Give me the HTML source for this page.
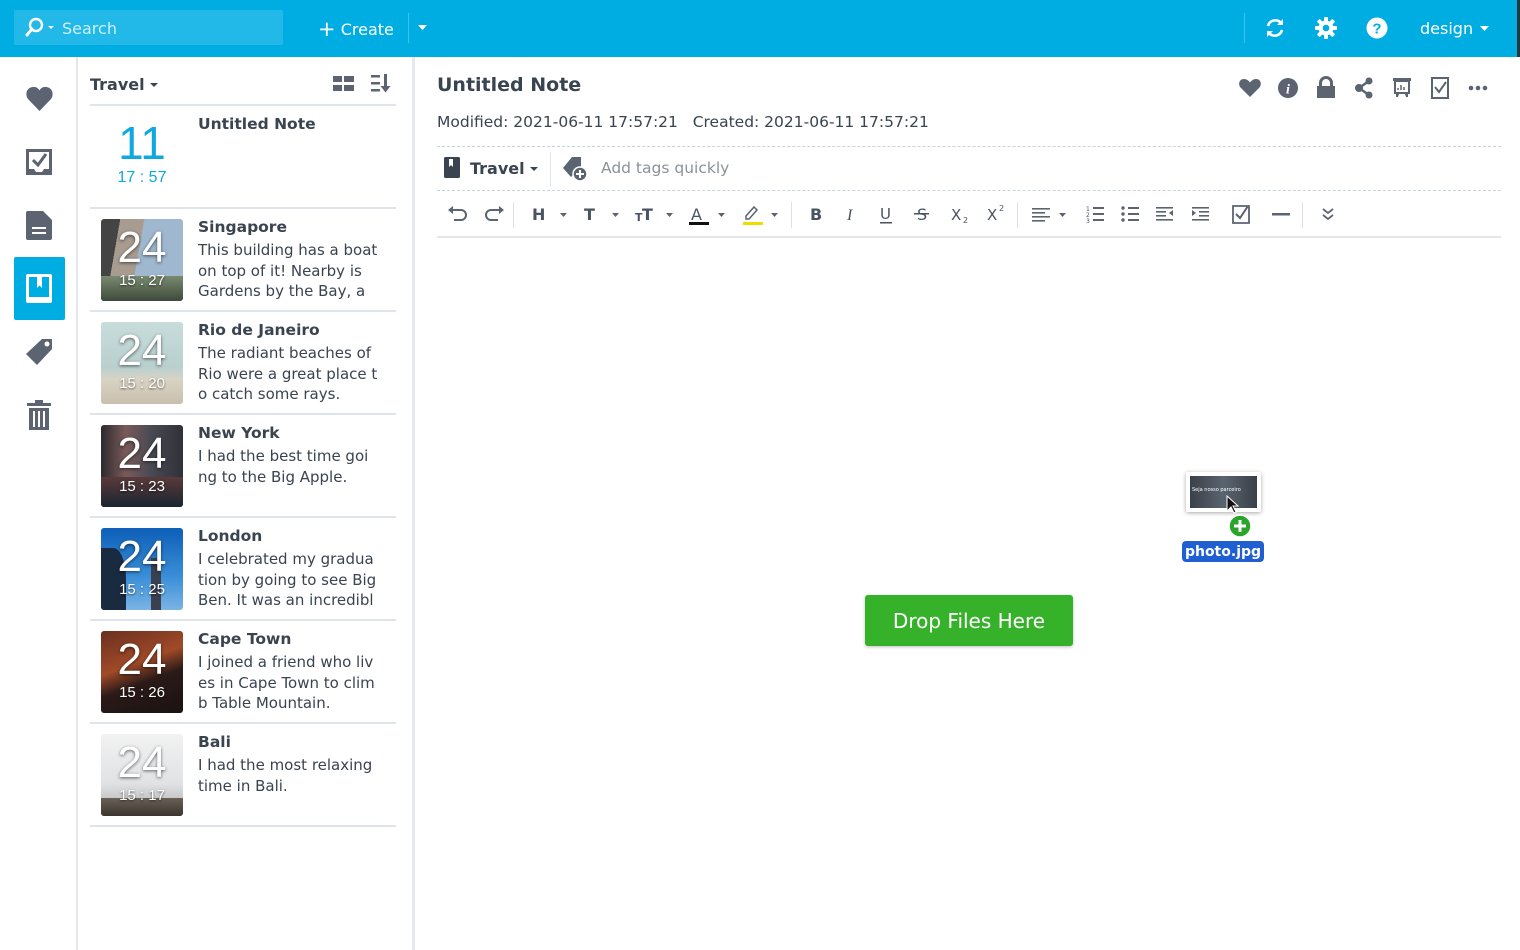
<!DOCTYPE html>
<html><head><meta charset="utf-8"><style>
*{margin:0;padding:0;box-sizing:border-box}
body{width:1520px;height:950px;overflow:hidden;background:#fff;font-family:"DejaVu Sans","Liberation Sans",sans-serif;color:#3a4350;position:relative}
.a{position:absolute}
.top{left:0;top:0;width:1520px;height:57px;background:#00ade2}
.search{left:14px;top:10px;width:269px;height:35px;background:#22b9e8;border-radius:2px}
.wt{color:#fff;font-size:15px}
.side{left:0;top:57px;width:78px;height:893px;background:#fff;border-right:2px solid #e4e7eb}
.list{left:80px;top:57px;width:335px;height:893px;border-right:3px solid #e6e9ed}
.item{left:90px;width:306px;height:103px;border-bottom:2px solid #dfe4ea}
.th{left:11px;top:10px;width:82px;height:82px;border-radius:3px;overflow:hidden}
.th .d{position:absolute;left:0;width:82px;text-align:center;top:4px;font-family:"Liberation Sans",sans-serif;font-size:44px;color:#fff;text-shadow:0 1px 3px rgba(0,0,0,.6)}
.th .t{position:absolute;left:0;width:82px;text-align:center;top:53px;font-family:"Liberation Sans",sans-serif;font-size:15px;color:#fff;text-shadow:0 1px 2px rgba(0,0,0,.6)}
.nt{left:108px;top:9px;font-weight:bold;font-size:15.5px;color:#3a4350}
.nb{left:108px;top:31px;font-size:15px;line-height:20.5px;color:#3a4350;white-space:nowrap}
.dash{left:437px;width:1064px;border-top:1px dashed #c9d3dc}
</style></head><body>
<div class="a top"></div>
<div class="a" style="left:1517px;top:0;width:3px;height:57px;background:#1d3640"></div>
<div class="a search"></div>
<svg class="a" style="left:24px;top:17px" width="34" height="22" viewBox="0 0 34 22"><circle cx="12" cy="8" r="6" fill="none" stroke="#fff" stroke-width="2.4"/><path d="M8 12 3 18" stroke="#fff" stroke-width="3" stroke-linecap="round"/><path d="M24 9h6l-3 3z" fill="#fff"/></svg>
<div class="a wt" style="left:62px;top:19px;color:#cdeffa;font-size:16px">Search</div>
<div class="a wt" style="left:318px;top:16px;font-size:16px"><span style="font-size:21px;position:relative;top:1px">+</span> Create</div>
<div class="a" style="left:408px;top:13px;width:1px;height:30px;background:#3cc2ec"></div>
<svg class="a" style="left:418px;top:25px" width="10" height="6"><path d="M0 0h9l-4.5 5z" fill="#fff"/></svg>
<div class="a" style="left:1244px;top:13px;width:1px;height:30px;background:#3cc2ec"></div>
<svg class="a" style="left:1264px;top:17px" width="22" height="22" viewBox="0 0 22 22"><path d="M4 9a7.5 7.5 0 0 1 13-3" fill="none" stroke="#fff" stroke-width="2.6"/><path d="M19 2v6h-6z" fill="#fff"/><path d="M18 13a7.5 7.5 0 0 1-13 3" fill="none" stroke="#fff" stroke-width="2.6"/><path d="M3 20v-6h6z" fill="#fff"/></svg>
<svg class="a" style="left:1315px;top:17px" width="22" height="22" viewBox="0 0 22 22"><g fill="#fff"><circle cx="11" cy="11" r="7.5"/><rect x="9" y="0" width="4" height="22" rx="1"/><rect x="9" y="0" width="4" height="22" rx="1" transform="rotate(45 11 11)"/><rect x="9" y="0" width="4" height="22" rx="1" transform="rotate(90 11 11)"/><rect x="9" y="0" width="4" height="22" rx="1" transform="rotate(135 11 11)"/></g><circle cx="11" cy="11" r="3.3" fill="#00ade2"/></svg>
<svg class="a" style="left:1366px;top:17px" width="22" height="22" viewBox="0 0 22 22"><circle cx="11" cy="11" r="10.5" fill="#fff"/><text x="11" y="16.5" font-size="15" font-weight="bold" text-anchor="middle" fill="#00ade2" font-family="Liberation Sans">?</text></svg>
<div class="a wt" style="left:1420px;top:19px;font-size:16px">design</div>
<svg class="a" style="left:1480px;top:26px" width="10" height="6"><path d="M0 0h9l-4.5 5z" fill="#fff"/></svg>

<div class="a side"></div>
<svg class="a" style="left:26px;top:86px" width="27" height="25" viewBox="0 0 27 25"><path d="M13.5 25 2 13C-1 9 0 2 6.5 1c3.5-.5 6 1.5 7 3.5 1-2 3.5-4 7-3.5C27 2 28 9 25 13z" fill="#5b6470"/></svg>
<svg class="a" style="left:26px;top:149px" width="26" height="26" viewBox="0 0 26 26"><path d="M0 0h26v26H0z" fill="#5b6470"/><path d="M3 3h20v17h-5l-2 3h-6l-2-3H3z" fill="#fff"/><path d="M7 11l5 5 8-11" fill="none" stroke="#5b6470" stroke-width="3"/></svg>
<svg class="a" style="left:26px;top:211px" width="26" height="29" viewBox="0 0 26 29"><path d="M2 0h15l9 9v18a2 2 0 0 1-2 2H2a2 2 0 0 1-2-2V2a2 2 0 0 1 2-2z" fill="#5b6470"/><path d="M6 17h14M6 22h14" stroke="#fff" stroke-width="2"/></svg>
<div class="a" style="left:14px;top:257px;width:51px;height:63px;background:#00ade2;border-radius:2px"></div>
<svg class="a" style="left:26px;top:274px" width="26" height="29" viewBox="0 0 26 29"><rect x="0" y="0" width="26" height="29" rx="2" fill="#fff"/><rect x="3" y="3" width="20" height="20" fill="#00ade2"/><path d="M11 3h5v11l-2.5-2.5L11 14z" fill="#fff"/></svg>
<svg class="a" style="left:25px;top:337px" width="30" height="30" viewBox="0 0 30 30"><path d="M17 2h10v10L12 28 1 17z" fill="#5b6470"/><circle cx="22" cy="7" r="2.5" fill="#fff"/></svg>
<svg class="a" style="left:27px;top:400px" width="24" height="30" viewBox="0 0 24 30"><rect x="8" y="0" width="8" height="3" fill="#5b6470"/><rect x="0" y="3" width="24" height="3" fill="#5b6470"/><path d="M2 8h20v22H2z" fill="#5b6470"/><path d="M7 11v16M12 11v16M17 11v16" stroke="#fff" stroke-width="2"/></svg>

<div class="a list"></div>
<div class="a" style="left:90px;top:75px;font-weight:bold;font-size:16px">Travel</div>
<svg class="a" style="left:150px;top:83px" width="10" height="6"><path d="M0 0h8l-4 4z" fill="#3a4350"/></svg>
<svg class="a" style="left:333px;top:76px" width="21" height="16"><g fill="#5b6470"><rect width="9" height="6"/><rect x="11" width="10" height="6"/><rect y="9" width="9" height="6"/><rect x="11" y="9" width="10" height="6"/></g></svg>
<svg class="a" style="left:371px;top:74px" width="21" height="19"><g fill="#5b6470"><rect y="1" width="9" height="2.5"/><rect y="8" width="9" height="2.5"/><rect y="15" width="9" height="2.5"/><rect x="13" y="0" width="3" height="13"/><path d="M9.5 12h10l-5 6.5z"/></g></svg>
<div class="a" style="left:90px;top:104px;width:306px;border-top:2px solid #dfe4ea"></div>

<div class="a item" style="top:106px">
 <div class="a" style="left:11px;top:10px;width:82px;text-align:center;font-family:'Liberation Sans',sans-serif;font-size:46px;color:#0fa8df">11</div>
 <div class="a" style="left:11px;top:63px;width:82px;text-align:center;font-family:'Liberation Sans',sans-serif;font-size:16px;color:#0fa8df">17 : 57</div>
 <div class="a nt" style="top:9px">Untitled Note</div>
</div>
<div class="a item" style="top:209px">
 <div class="a th" style="background:linear-gradient(100deg,#444 0 20%,#a89c90 20% 45%,#9fb8cf 45%),#888"><div style="position:absolute;left:0;bottom:0;width:82px;height:25px;background:linear-gradient(#7a8a70,#3d4a3a)"></div><div class="d">24</div><div class="t">15 : 27</div></div>
 <div class="a nt">Singapore</div>
 <div class="a nb">This building has a boat<br>on top of it! Nearby is<br>Gardens by the Bay, a</div>
</div>
<div class="a item" style="top:312px">
 <div class="a th" style="background:linear-gradient(#c8dcdc,#b9d0cf 55%,#d9d3c4 70%,#c9bfae)"><div class="d">24</div><div class="t">15 : 20</div></div>
 <div class="a nt">Rio de Janeiro</div>
 <div class="a nb">The radiant beaches of<br>Rio were a great place t<br>o catch some rays.</div>
</div>
<div class="a item" style="top:415px">
 <div class="a th" style="background:linear-gradient(90deg,#2a2a2e,#7a5a5a 30%,#4a4a55 60%,#303038),#333"><div style="position:absolute;left:0;bottom:0;width:82px;height:30px;background:linear-gradient(#5a3a3a,#1a2530)"></div><div class="d">24</div><div class="t">15 : 23</div></div>
 <div class="a nt">New York</div>
 <div class="a nb">I had the best time goi<br>ng to the Big Apple.</div>
</div>
<div class="a item" style="top:518px">
 <div class="a th" style="background:linear-gradient(#0d5fb8,#3b8fd8 60%,#7ab4e4)"><div style="position:absolute;left:0;top:20px;width:25px;height:62px;background:#1a2a40;border-radius:0 50% 0 0"></div><div style="position:absolute;left:50px;top:30px;width:10px;height:52px;background:#3a4050"></div><div class="d">24</div><div class="t">15 : 25</div></div>
 <div class="a nt">London</div>
 <div class="a nb">I celebrated my gradua<br>tion by going to see Big<br>Ben. It was an incredibl</div>
</div>
<div class="a item" style="top:621px">
 <div class="a th" style="background:linear-gradient(160deg,#6a3020,#a04a28 40%,#2a1a18 60%,#1a1212)"><div class="d">24</div><div class="t">15 : 26</div></div>
 <div class="a nt">Cape Town</div>
 <div class="a nb">I joined a friend who liv<br>es in Cape Town to clim<br>b Table Mountain.</div>
</div>
<div class="a item" style="top:724px">
 <div class="a th" style="background:linear-gradient(#f2f2f2,#e0e2e4 60%,#a8aaa8)"><div style="position:absolute;left:0;bottom:0;width:82px;height:18px;background:linear-gradient(#6a6055,#3a3530)"></div><div class="d">24</div><div class="t">15 : 17</div></div>
 <div class="a nt">Bali</div>
 <div class="a nb">I had the most relaxing<br>time in Bali.</div>
</div>

<div class="a" style="left:437px;top:74px;font-weight:bold;font-size:19px;color:#3a4350">Untitled Note</div>
<div class="a" style="left:437px;top:113px;font-size:15.5px;color:#3a4350;white-space:pre">Modified: 2021-06-11 17:57:21   Created: 2021-06-11 17:57:21</div>
<svg class="a" style="left:1238px;top:76px" width="260" height="24" viewBox="0 0 260 24">
<g fill="#5b6470">
<path d="M12 21 2.5 11.5C0 8.5 1 3 6 3c3 0 5 2 6 3.5C13 5 15 3 18 3c5 0 6 5.5 3.5 8.5z"/>
<circle cx="50" cy="12" r="10"/>
<path d="M81 10V7a7 7 0 0 1 14 0v3h-3V7a4 4 0 0 0-8 0v3zM79 10h18v12H79z"/>
<circle cx="131" cy="5" r="3.5"/><circle cx="131" cy="19" r="3.5"/><circle cx="121" cy="12" r="4"/><path d="M121 12l10-7M121 12l10 7" stroke="#5b6470" stroke-width="2.5"/>
<path d="M155 2h18v3h-1v13h-16V5h-1z"/><path d="M158 21h2l1-3h-3zM170 21h-2l-1-3h3z"/>
<path d="M193 1h18v22h-18z"/>
<circle cx="233" cy="12" r="2.3"/><circle cx="240" cy="12" r="2.3"/><circle cx="247" cy="12" r="2.3"/>
</g>
<text x="50" y="17.5" font-size="14" font-weight="bold" font-style="italic" text-anchor="middle" fill="#fff" font-family="Liberation Serif">i</text>
<rect x="158" y="6" width="12" height="10" fill="#fff"/><path d="M160 14v-2M163 14v-5M166 14v-3" stroke="#5b6470" stroke-width="1.5"/>
<rect x="195" y="3" width="14" height="18" fill="#fff"/><path d="M197 11l4 5 7-10" fill="none" stroke="#5b6470" stroke-width="2"/>
</svg>
<div class="a dash" style="top:146px"></div>
<svg class="a" style="left:444px;top:157px" width="16" height="21"><rect width="16" height="21" rx="1.5" fill="#3a4350"/><path d="M5 2h4v8l-2-2-2 2z" fill="#fff"/></svg>
<div class="a" style="left:470px;top:159px;font-weight:bold;font-size:16px">Travel</div>
<svg class="a" style="left:530px;top:167px" width="9" height="6"><path d="M0 0h8l-4 4z" fill="#3a4350"/></svg>
<div class="a" style="left:550px;top:152px;width:1px;height:34px;background:#e0e4e8"></div>
<svg class="a" style="left:562px;top:156px" width="26" height="26" viewBox="0 0 26 26"><path d="M10 1h9v9L9 21 1 12z" fill="#5b6470"/><circle cx="18" cy="18" r="7" fill="#5b6470" stroke="#fff" stroke-width="1.5"/><path d="M18 14v8M14 18h8" stroke="#fff" stroke-width="2"/></svg>
<div class="a" style="left:601px;top:159px;font-size:15.5px;color:#8a929c">Add tags quickly</div>
<div class="a dash" style="top:190px"></div>
<div class="a" style="left:437px;top:236px;width:1064px;height:2px;background:#e3e6e9"></div>
<svg class="a" style="left:445px;top:200px" width="900" height="30" viewBox="0 0 900 30" font-family="DejaVu Sans" fill="#4a5360">
<g fill="none" stroke="#5b6470" stroke-width="2"><path d="M7 10h9a5 5 0 0 1 0 10H9"/><path d="M55 10h-9a5 5 0 0 0 0 10h7"/></g>
<path d="M3 10l5-4v8zM59 10l-5-4v8z" fill="#5b6470"/>
<rect x="68" y="2" width="1" height="26" fill="#dde1e5"/>
<text x="87" y="20" font-size="16" font-weight="bold">H</text>
<text x="139" y="20" font-size="16" font-weight="bold">T</text>
<text x="190" y="21" font-size="11" font-weight="bold">T</text><text x="197" y="20" font-size="16" font-weight="bold">T</text>
<text x="246" y="20" font-size="16">A</text><rect x="244" y="22" width="20" height="3" fill="#111"/>
<path d="M301 16l8-9 3 3-8 9h-3z" fill="none" stroke="#5b6470" stroke-width="1.5"/><rect x="298" y="22" width="20" height="3" fill="#f2dc00"/>
<g fill="#5b6470"><path d="M115 13h7l-3.5 4z"/><path d="M167 13h7l-3.5 4z"/><path d="M221 13h7l-3.5 4z"/><path d="M273 13h7l-3.5 4z"/><path d="M326 13h7l-3.5 4z"/><path d="M614 13h7l-3.5 4z"/></g>
<rect x="346" y="2" width="1" height="26" fill="#dde1e5"/>
<text x="365" y="20" font-size="16" font-weight="bold">B</text>
<text x="402" y="20" font-size="16" font-style="italic" font-family="Liberation Serif">I</text>
<text x="435" y="19" font-size="15">U</text><rect x="435" y="22" width="12" height="1.5"/>
<text x="472" y="20" font-size="16">S</text><rect x="469" y="13" width="15" height="1.5"/>
<text x="506" y="20" font-size="15">X</text><text x="518" y="23" font-size="8">2</text>
<text x="542" y="20" font-size="15">X</text><text x="554" y="11" font-size="8">2</text>
<rect x="572" y="2" width="1" height="26" fill="#dde1e5"/>
<g fill="#5b6470"><rect x="587" y="8" width="18" height="1.6"/><rect x="587" y="12" width="13" height="1.6"/><rect x="587" y="16" width="18" height="1.6"/><rect x="587" y="20" width="13" height="1.6"/>
<rect x="648" y="7" width="11" height="2"/><rect x="648" y="13" width="11" height="2"/><rect x="648" y="19" width="11" height="2"/>
<circle cx="678" cy="8" r="1.7"/><circle cx="678" cy="14" r="1.7"/><circle cx="678" cy="20" r="1.7"/><rect x="683" y="7" width="11" height="2"/><rect x="683" y="13" width="11" height="2"/><rect x="683" y="19" width="11" height="2"/>
<rect x="711" y="7" width="17" height="1.6"/><rect x="711" y="11" width="10" height="1.6"/><rect x="711" y="15" width="10" height="1.6"/><rect x="711" y="19" width="17" height="1.6"/><path d="M728 10v6l-4-3z"/>
<rect x="747" y="7" width="17" height="1.6"/><rect x="754" y="11" width="10" height="1.6"/><rect x="754" y="15" width="10" height="1.6"/><rect x="747" y="19" width="17" height="1.6"/><path d="M747 10v6l4-3z"/>
<rect x="827" y="13" width="18" height="2.5"/></g>
<text x="641" y="11" font-size="6">1</text><text x="641" y="17" font-size="6">2</text><text x="641" y="23" font-size="6">3</text>
<path d="M788 6h16v17h-16z" fill="none" stroke="#5b6470" stroke-width="1.8"/><path d="M791 14l4 4 8-12" fill="none" stroke="#5b6470" stroke-width="2"/>
<rect x="857" y="2" width="1" height="26" fill="#dde1e5"/>
<path d="M878 9l5 4 5-4M878 15l5 4 5-4" fill="none" stroke="#5b6470" stroke-width="1.8"/>
</svg>

<div class="a" style="left:1186px;top:472px;width:75px;height:40px;background:#fff;box-shadow:0 1px 4px rgba(0,0,0,.35);border-radius:2px"></div>
<div class="a" style="left:1190px;top:476px;width:67px;height:32px;background:linear-gradient(90deg,#3a4048,#5a6470,#3a4048)"></div>
<div class="a" style="left:1192px;top:487px;font-size:5px;color:#fff">Seja nosso parceiro</div>
<svg class="a" style="left:1226px;top:495px" width="14" height="20"><path d="M1 1v15l4-4 3 6 2-1-3-6h5z" fill="#111" stroke="#fff" stroke-width="1"/></svg>
<svg class="a" style="left:1228px;top:514px" width="24" height="24"><circle cx="12" cy="12" r="11" fill="#2aa52a" stroke="#fff" stroke-width="1.5"/><path d="M12 6v12M6 12h12" stroke="#fff" stroke-width="3"/></svg>
<div class="a" style="left:1182px;top:541px;width:82px;height:21px;background:#1f5fd1;border-radius:4px;color:#fff;font-weight:bold;font-size:14px;text-align:center;line-height:22px">photo.jpg</div>

<div class="a" style="left:865px;top:595px;width:208px;height:51px;background:#36b22a;border-radius:3px;box-shadow:0 1px 3px rgba(0,0,0,.25);color:#fff;font-size:20px;text-align:center;line-height:52px">Drop Files Here</div>
</body></html>
